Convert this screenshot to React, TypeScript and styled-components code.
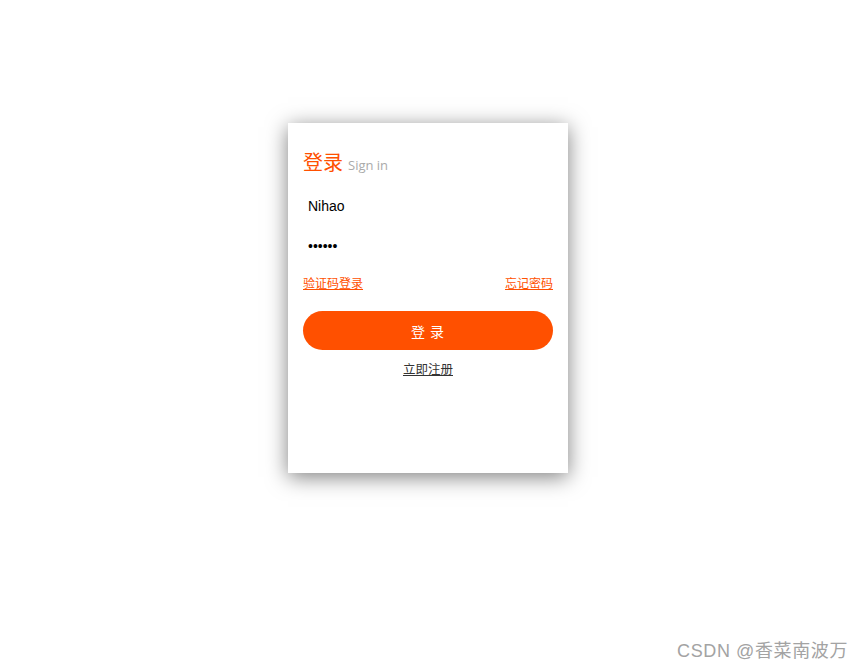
import styled, { createGlobalStyle } from 'styled-components';

const GlobalStyle = createGlobalStyle`
  html, body {
    margin: 0;
    padding: 0;
    background: #ffffff;
  }
  body {
    width: 864px;
    height: 670px;
    overflow: hidden;
    font-family: "Microsoft YaHei", "Noto Sans CJK SC", sans-serif;
  }
`;

const BRAND = '#ff5000';

export default function App() {
  return (
    <>
      <GlobalStyle />
      <Page>
        <Card>
          <Header>
            <Title>登录</Title>
            <SubTitle>Sign in</SubTitle>
          </Header>
          <Field type="text" defaultValue="Nihao" />
          <Field type="password" defaultValue="123456" />
          <LinkRow>
            <OrangeLink href="#">验证码登录</OrangeLink>
            <OrangeLink href="#">忘记密码</OrangeLink>
          </LinkRow>
          <SubmitButton type="button">登 录</SubmitButton>
          <RegisterRow>
            <RegisterLink href="#">立即注册</RegisterLink>
          </RegisterRow>
        </Card>
        <Watermark>CSDN @香菜南波万</Watermark>
      </Page>
    </>
  );
}

const Page = styled.div`
  position: relative;
  width: 864px;
  height: 670px;
  display: flex;
  justify-content: center;
  align-items: flex-start;
  padding: 123px 8px 0 0;
  box-sizing: border-box;
`;

const Card = styled.div`
  width: 280px;
  height: 350px;
  box-sizing: border-box;
  padding: 24px 15px 0;
  background: #fff;
  box-shadow: 0 4px 20px rgba(0, 0, 0, 0.5);
  display: flex;
  flex-direction: column;
`;

const Header = styled.div`
  display: flex;
  align-items: baseline;
  gap: 5px;
  height: 28px;
  margin-bottom: 11px;
`;

const Title = styled.span`
  font-size: 20px;
  color: ${BRAND};
  font-family: "Noto Sans CJK SC", sans-serif;
`;

const SubTitle = styled.span`
  font-size: 13px;
  color: #aaa;
  font-family: "Open Sans", "Noto Sans", sans-serif;
`;

const Field = styled.input`
  width: 100%;
  height: 40px;
  box-sizing: border-box;
  border: none;
  outline: none;
  padding: 0 5px;
  font-size: 14px;
  font-family: "Liberation Sans", Arial, sans-serif;
  color: #000;
  background: transparent;
`;

const LinkRow = styled.div`
  display: flex;
  justify-content: space-between;
  margin-top: 9px;
`;

const OrangeLink = styled.a`
  font-size: 12px;
  color: ${BRAND};
  text-decoration: underline;
  font-family: "Noto Sans CJK SC", sans-serif;
  line-height: 16px;
`;

const SubmitButton = styled.button`
  margin-top: 20px;
  width: 100%;
  height: 39px;
  border: none;
  border-radius: 20px;
  background: ${BRAND};
  color: #fff;
  font-size: 14px;
  letter-spacing: 1px;
  font-family: "Noto Sans CJK SC", sans-serif;
  cursor: pointer;
`;

const RegisterRow = styled.div`
  display: flex;
  justify-content: center;
  margin-top: 11px;
`;

const RegisterLink = styled.a`
  font-size: 12.5px;
  color: #333;
  text-decoration: underline;
  font-family: "Noto Sans CJK SC", sans-serif;
  line-height: 16px;
`;

const Watermark = styled.div`
  position: absolute;
  right: 16px;
  bottom: 8px;
  font-size: 18px;
  letter-spacing: 0.6px;
  color: #a3a3a3;
  font-family: "Liberation Sans", "Noto Sans CJK SC", sans-serif;
`;
